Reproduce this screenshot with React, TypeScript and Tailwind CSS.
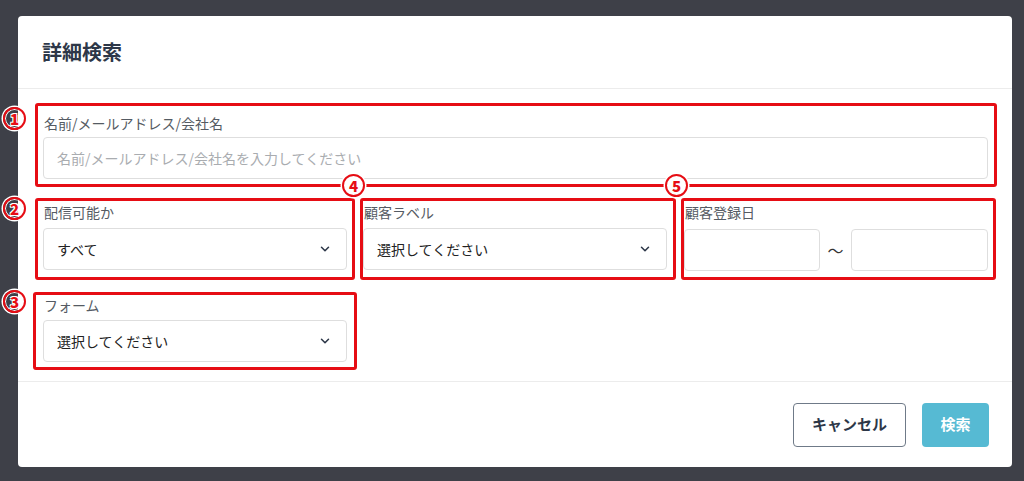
import React from 'react';
import { ChevronDown } from 'lucide-react';

const font = { fontFamily: '"Noto Sans CJK JP", "Noto Sans", sans-serif' };

const Mark = ({ n, className }: { n: string; className: string }) => (
  <div
    className={`absolute w-[23px] h-[23px] rounded-full border-[2.5px] border-[#e60d14] flex items-center justify-center text-[15px] font-black leading-none text-[#e60d14] shadow-[0_0_0_1.5px_#fff,inset_0_0_0_1px_#fff] [text-shadow:1px_1px_0_#fff,-1px_-1px_0_#fff,1px_-1px_0_#fff,-1px_1px_0_#fff] ${className}`}
  >
    {n}
  </div>
);

const SelectBox = ({ value }: { value: string }) => (
  <div className="h-[42px] rounded-[4px] border border-[#dedede] bg-white flex items-center justify-between pl-[13px] pr-[14px]">
    <span className="text-[14px] text-[#222]">{value}</span>
    <ChevronDown className="w-[14px] h-[14px] text-[#2d3748]" strokeWidth={2.6} />
  </div>
);

const Label = ({ children }: { children: React.ReactNode }) => (
  <div className="text-[14px] leading-[20px] text-[#555b63] pl-[1px]">{children}</div>
);

export default function App() {
  return (
    <div style={font} className="relative w-[1024px] h-[481px] bg-[#3e4048] pt-[16px] pl-[18px] overflow-hidden">
      <div className="w-[994px] h-[451px] bg-white rounded-[4px] flex flex-col">
        {/* header */}
        <div className="h-[73px] flex items-center px-[24px] border-b border-[#ececec]">
          <h2 className="text-[20px] font-bold text-[#2d3748]">詳細検索</h2>
        </div>

        {/* body */}
        <div className="h-[293px] pt-[14px] pl-[17px] pr-[15px] flex flex-col border-b border-[#ececec]">
          <div className="border-[3px] border-[#e60d14] rounded-[3px] pt-[7px] pb-[5px] pl-[5px] pr-[6px]">
            <Label>名前/メールアドレス/会社名</Label>
            <div className="mt-[4px] h-[42px] rounded-[4px] border border-[#dedede] flex items-center px-[13px] text-[14px] text-[#a9acb0]">
              名前/メールアドレス/会社名を入力してください
            </div>
          </div>

          <div className="mt-[11px] flex gap-[5px]">
            <div className="w-[320px] border-[3px] border-[#e60d14] rounded-[3px] pt-[1px] pb-[7px] px-[5px]">
              <Label>配信可能か</Label>
              <div className="mt-[6px]">
                <SelectBox value="すべて" />
              </div>
            </div>
            <div className="w-[316px] border-[3px] border-[#e60d14] rounded-[3px] pt-[1px] pb-[7px] pl-0 pr-[6px]">
              <Label>顧客ラベル</Label>
              <div className="mt-[6px]">
                <SelectBox value="選択してください" />
              </div>
            </div>
            <div className="w-[315px] border-[3px] border-[#e60d14] rounded-[3px] pt-[1px] pb-[6px] pl-0 pr-[5px]">
              <Label>顧客登録日</Label>
              <div className="mt-[7px] flex items-center">
                <div className="w-[136px] h-[42px] rounded-[4px] border border-[#dedede]" />
                <span className="flex-1 text-center text-[16px] text-[#333]">〜</span>
                <div className="w-[137px] h-[42px] rounded-[4px] border border-[#dedede]" />
              </div>
            </div>
          </div>

          <div className="mt-[12px] ml-[-2px] w-[324px] border-[3px] border-[#e60d14] rounded-[3px] pb-[5px] pl-[7px] pr-[7px]">
            <Label>フォーム</Label>
            <div className="mt-[5px]">
              <SelectBox value="選択してください" />
            </div>
          </div>
        </div>

        {/* footer */}
        <div className="flex-1 flex items-center justify-end gap-[16px] pr-[23px]">
          <button className="w-[113px] h-[44px] rounded-[4px] border border-[#6f7a88] text-[15px] font-bold text-[#2d3748] bg-white">
            キャンセル
          </button>
          <button className="w-[67px] h-[44px] rounded-[4px] bg-[#56bad3] text-[15px] font-bold text-white">
            検索
          </button>
        </div>
      </div>

      <Mark n="1" className="left-[3px] top-[107px]" />
      <Mark n="2" className="left-[3px] top-[197px]" />
      <Mark n="3" className="left-[3px] top-[290px]" />
      <Mark n="4" className="left-[342px] top-[174px] bg-white" />
      <Mark n="5" className="left-[665px] top-[174px] bg-white" />
    </div>
  );
}
